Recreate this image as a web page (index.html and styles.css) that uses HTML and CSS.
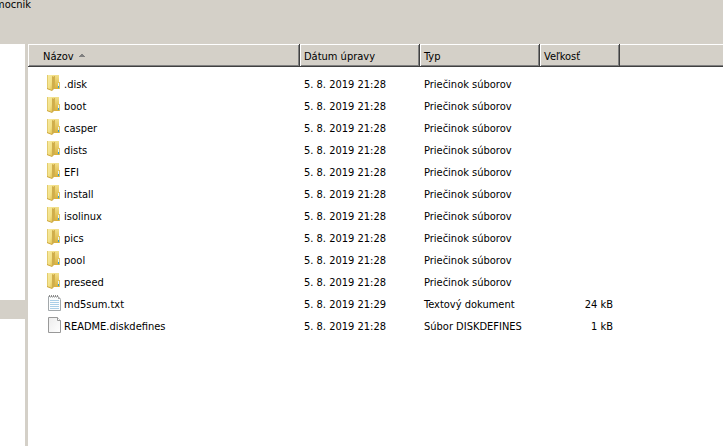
FILE: index.html
```
<!DOCTYPE html>
<html lang="sk">
<head>
    <meta charset="UTF-8">
    <title>Prieskumník</title>
    <link rel="stylesheet" href="styles.css">
</head>
<body>

<svg class="symbols" aria-hidden="true">
    <defs>
        <linearGradient id="gold" x1="0" x2="1" y1="0" y2="1">
            <stop offset="0" stop-color="#f8eca6"/>
            <stop offset="0.6" stop-color="#f3e188"/>
            <stop offset="1" stop-color="#dfba45"/>
        </linearGradient>
        <linearGradient id="goldDark" x1="0" x2="0" y1="0" y2="1">
            <stop offset="0" stop-color="#f2e08c"/>
            <stop offset="1" stop-color="#d9b03a"/>
        </linearGradient>
        <linearGradient id="paper" x1="0" x2="1" y1="0" y2="1">
            <stop offset="0" stop-color="#ececec"/>
            <stop offset="1" stop-color="#ffffff"/>
        </linearGradient>
    </defs>
    <symbol id="folder" viewBox="0 0 16 16">
        <path d="M5 0h7v7h1v7H5z" fill="url(#goldDark)"/>
        <path d="M7 1h1v13H7z" fill="#d3b04a"/>
        <path d="M0 0h6v15H4l-4-1z" fill="url(#gold)"/>
        <path d="M5 1l2 1v12l-2 2z" fill="#cfae4c"/>
        <path d="M0 0h1v14H0z" fill="#e3cb6c"/>
        <path d="M0 13l5 2v1l-5-2z" fill="#cda63c"/>
        <path d="M11 8h1v3h-1z" fill="#e4f4fb"/>
        <path d="M11 11h1v2h-1z" fill="#2f9fd8"/>
        <path d="M12 7h1v7h-1z" fill="#e0c45e"/>
    </symbol>
    <symbol id="text" viewBox="0 0 16 16">
        <path d="M1.500 1.500h9l3 3v11h-12z" fill="#fbfdfe" stroke="#a3a8ab"/>
        <path d="M3 5h9v1H3zM3 7h9v1H3zM3 9h9v1H3zM3 11h9v1H3zM3 13h9v1H3z" fill="#a9cfe8"/>
        <path d="M2 0h1v2H2zM4 0h1v2H4zM6 0h1v2H6zM8 0h1v2H8zM10 0h1v2h-1z" fill="#8d8d8d"/>
        <path d="M3 1h1v2H3zM5 1h1v2H5zM7 1h1v2H7zM9 1h1v2H9z" fill="#c4c4c4"/>
        <path d="M11 1l3 3h-3z" fill="#a8a8a8"/>
    </symbol>
    <symbol id="file" viewBox="0 0 16 16">
        <path d="M1.500 0.500h9l3 3v12h-12z" fill="url(#paper)" stroke="#999999"/>
        <path d="M10.500 0.500v3h3" fill="#fff" stroke="#999999"/>
    </symbol>
</svg>

<header class="toolbar">
    <button type="button" class="menu-item">mocnik</button>
</header>

<div class="explorer">
    <nav class="tree">
        <div class="tree-selected"></div>
    </nav>

    <main class="list">
        <table class="files">
            <colgroup>
                <col class="col-name">
                <col class="col-date">
                <col class="col-type">
                <col class="col-size">
                <col>
            </colgroup>
            <thead>
                <tr>
                    <th class="name">Názov <svg class="sort" viewBox="0 0 6 3"><path d="M2 0h2v1h1v1h1v1H0V2h1V1h1z"/></svg></th>
                    <th>Dátum úpravy</th>
                    <th>Typ</th>
                    <th>Veľkosť</th>
                    <td class="filler"></td>
                </tr>
            </thead>
            <tbody>
                <tr><td class="name"><svg class="icon"><use href="#folder"/></svg>.disk</td><td>5. 8. 2019 21:28</td><td>Priečinok súborov</td><td class="size"></td><td></td></tr>
                <tr><td class="name"><svg class="icon"><use href="#folder"/></svg>boot</td><td>5. 8. 2019 21:28</td><td>Priečinok súborov</td><td class="size"></td><td></td></tr>
                <tr><td class="name"><svg class="icon"><use href="#folder"/></svg>casper</td><td>5. 8. 2019 21:28</td><td>Priečinok súborov</td><td class="size"></td><td></td></tr>
                <tr><td class="name"><svg class="icon"><use href="#folder"/></svg>dists</td><td>5. 8. 2019 21:28</td><td>Priečinok súborov</td><td class="size"></td><td></td></tr>
                <tr><td class="name"><svg class="icon"><use href="#folder"/></svg>EFI</td><td>5. 8. 2019 21:28</td><td>Priečinok súborov</td><td class="size"></td><td></td></tr>
                <tr><td class="name"><svg class="icon"><use href="#folder"/></svg>install</td><td>5. 8. 2019 21:28</td><td>Priečinok súborov</td><td class="size"></td><td></td></tr>
                <tr><td class="name"><svg class="icon"><use href="#folder"/></svg>isolinux</td><td>5. 8. 2019 21:28</td><td>Priečinok súborov</td><td class="size"></td><td></td></tr>
                <tr><td class="name"><svg class="icon"><use href="#folder"/></svg>pics</td><td>5. 8. 2019 21:28</td><td>Priečinok súborov</td><td class="size"></td><td></td></tr>
                <tr><td class="name"><svg class="icon"><use href="#folder"/></svg>pool</td><td>5. 8. 2019 21:28</td><td>Priečinok súborov</td><td class="size"></td><td></td></tr>
                <tr><td class="name"><svg class="icon"><use href="#folder"/></svg>preseed</td><td>5. 8. 2019 21:28</td><td>Priečinok súborov</td><td class="size"></td><td></td></tr>
                <tr><td class="name"><svg class="icon"><use href="#text"/></svg>md5sum.txt</td><td>5. 8. 2019 21:29</td><td>Textový dokument</td><td class="size">24 kB</td><td></td></tr>
                <tr><td class="name"><svg class="icon"><use href="#file"/></svg>README.diskdefines</td><td>5. 8. 2019 21:28</td><td>Súbor DISKDEFINES</td><td class="size">1 kB</td><td></td></tr>
            </tbody>
        </table>
    </main>
</div>

</body>
</html>
```
FILE: styles.css
```
* {
    box-sizing: border-box;
}

body {
    margin: 0;
    min-height: 100vh;
    display: flex;
    flex-direction: column;
    background: #d4d0c8;
    color: #000;
    font-family: Tahoma, "DejaVu Sans Condensed", sans-serif;
    font-size: 11px;
    line-height: 14px;
}

.symbols {
    position: absolute;
    width: 0;
    height: 0;
}

.toolbar {
    height: 44px;
    overflow: hidden;
}

.menu-item {
    display: block;
    margin: -2px 0 0 -5px;
    padding: 0;
    border: none;
    background: none;
    color: inherit;
    font: inherit;
}

.explorer {
    flex: 1;
    display: flex;
}

.tree {
    width: 25px;
    margin-right: 3px;
    padding-top: 256px;
    background: #fff;
}

.tree-selected {
    height: 19px;
    background: #d4d0c8;
}

.list {
    flex: 1;
    min-width: 0;
    background: #fff;
}

.files {
    width: 100%;
    table-layout: fixed;
    border-collapse: collapse;
}

.col-name {
    width: 272px;
}

.col-date,
.col-type {
    width: 120px;
}

.col-size {
    width: 80px;
}

.files th,
.files td {
    height: 22px;
    padding: 2px 4px 0;
    text-align: left;
    font-weight: normal;
    white-space: nowrap;
}

/* raised header buttons */
.files th {
    height: 23px;
    background: #d4d0c8;
    box-shadow: inset -1px -1px #404040, inset 1px 1px #fff, inset -2px -2px #808080;
}

.files .filler {
    height: 23px;
    background: #d4d0c8;
    box-shadow: inset 0 -1px #404040, inset 0 1px #fff, inset 0 -2px #808080;
}

.files th.name {
    padding-left: 15px;
}

.files td.name {
    padding-left: 19px;
}

.files td.size {
    padding-right: 7px;
    text-align: right;
}

tbody::before {
    content: "";
    display: block;
    height: 6px;
}

.sort {
    width: 6px;
    height: 3px;
    margin-left: 2px;
    vertical-align: 3px;
    fill: #808080;
}

/* negative margins keep the icon from stretching the text line */
.icon {
    width: 16px;
    height: 16px;
    margin: -3px 1px -1px 0;
    vertical-align: -2px;
}
```
